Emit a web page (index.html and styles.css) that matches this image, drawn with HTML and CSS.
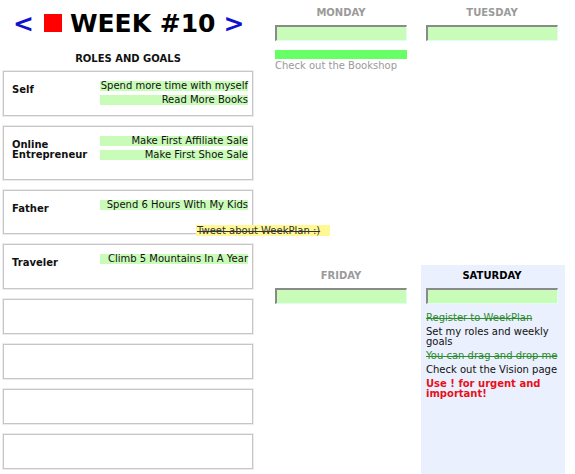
FILE: index.html
```html
<!DOCTYPE html>
<html>
<head>
<meta charset="utf-8">
<title>Week #10</title>
<link rel="stylesheet" href="styles.css">
</head>
<body>
<div class="page">
  <aside class="roles-panel">
    <div class="week-title">
      <span class="nav">&lt;</span>
      <span class="week-mark"></span>
      <span class="week-name">WEEK #10</span>
      <span class="nav">&gt;</span>
    </div>
    <h2 class="section-title">ROLES AND GOALS</h2>
    <div class="roles">
      <div class="role">
        <div class="role-name">Self</div>
        <div class="goals">
          <div class="goal">Spend more time with myself</div>
          <div class="goal">Read More Books</div>
        </div>
      </div>
      <div class="role role-tall">
        <div class="role-name">Online<br>Entrepreneur</div>
        <div class="goals">
          <div class="goal">Make First Affiliate Sale</div>
          <div class="goal">Make First Shoe Sale</div>
        </div>
      </div>
      <div class="role role-short">
        <div class="role-name">Father</div>
        <div class="goals">
          <div class="goal">Spend 6 Hours With My Kids</div>
        </div>
      </div>
      <div class="role">
        <div class="role-name">Traveler</div>
        <div class="goals">
          <div class="goal">Climb 5 Mountains In A Year</div>
        </div>
      </div>
      <div class="role role-empty"></div>
      <div class="role role-empty"></div>
      <div class="role role-empty"></div>
      <div class="role role-empty"></div>
    </div>
  </aside>

  <main class="days">
    <section class="day">
      <h3 class="day-name">MONDAY</h3>
      <div class="day-input"></div>
      <ul class="tasks">
        <li class="task task-bar"></li>
        <li class="task task-muted">Check out the Bookshop</li>
      </ul>
    </section>
    <section class="day">
      <h3 class="day-name">TUESDAY</h3>
      <div class="day-input"></div>
    </section>
    <section class="day">
      <h3 class="day-name">FRIDAY</h3>
      <div class="day-input"></div>
    </section>
    <section class="day day-today">
      <h3 class="day-name">SATURDAY</h3>
      <div class="day-input"></div>
      <ul class="tasks">
        <li class="task task-done">Register to WeekPlan</li>
        <li class="task">Set my roles and weekly goals</li>
        <li class="task task-done">You can drag and drop me</li>
        <li class="task">Check out the Vision page</li>
        <li class="task task-urgent">Use ! for urgent and important!</li>
      </ul>
    </section>
  </main>

  <div class="dragging">Tweet about WeekPlan :)</div>
</div>
</body>
</html>
```

FILE: styles.css
```css
html, body {
  margin: 0;
  padding: 0;
  background: #fff;
  overflow: hidden;
}

body {
  font-family: "DejaVu Sans", Verdana, sans-serif;
  font-size: 10px;
  color: #111;
}

.page {
  position: relative;
  display: flex;
  height: 474px;
}

/* ---------- roles column ---------- */
.roles-panel {
  flex: 0 0 258px;
  width: 258px;
  padding-left: 3px;
  box-sizing: border-box;
}

.week-title {
  display: flex;
  align-items: center;
  height: 46px;
  padding-left: 10px;
  font-weight: bold;
  font-size: 25px;
  white-space: nowrap;
}

.nav {
  color: #1010d0;
  font-size: 25px;
}

.week-mark {
  flex: 0 0 18px;
  width: 18px;
  height: 18px;
  background: #f00;
  margin: 0 8px 0 10px;
}

.week-name {
  color: #000;
  margin-right: 8px;
}

.section-title {
  margin: 6px 0 6px;
  width: 250px;
  text-align: center;
  font-size: 10px;
  font-weight: bold;
  line-height: 13px;
}

.roles {
  display: flex;
  flex-direction: column;
  gap: 10px;
  width: 250px;
}

.role {
  display: flex;
  height: 45px;
  box-sizing: border-box;
  border: 1px solid #c6c6c6;
  box-shadow: 0 0 0 1px #ececec;
}

.role-tall {
  height: 54px;
}

.role-short {
  height: 44px;
}

.role-empty {
  height: 35px;
}

.role-name {
  width: 96px;
  padding: 13px 0 0 8px;
  box-sizing: border-box;
  font-weight: bold;
  font-size: 10px;
  line-height: 10px;
}

.goals {
  flex: 1;
  padding: 9px 4px 0 0;
  display: flex;
  flex-direction: column;
  gap: 4px;
}

.goal {
  background: #c8fcb8;
  text-align: right;
  height: 10px;
  line-height: 10px;
  font-size: 10px;
  white-space: nowrap;
}

/* ---------- day columns ---------- */
.days {
  display: grid;
  grid-template-columns: 144px 144px;
  grid-template-rows: 263px 1fr;
  column-gap: 7px;
  padding: 2px 0 0 12px;
  align-content: start;
}

.day {
  padding: 5px 7px 0 5px;
}

.day-today {
  background: #eaf0fd;
}

.day-name {
  margin: 0;
  text-align: center;
  font-size: 10px;
  line-height: 12px;
  font-weight: bold;
  color: #9a9a9a;
}

.day-today .day-name {
  color: #000;
}

.day-input {
  margin-top: 6px;
  height: 16px;
  box-sizing: border-box;
  background: #c8fcb8;
  border-top: 2px solid #8a8a8a;
  border-left: 2px solid #8a8a8a;
  border-right: 1px solid #dfe;
  border-bottom: 1px solid #dfe;
}

.tasks {
  list-style: none;
  margin: 9px 0 0;
  padding: 0;
  display: flex;
  flex-direction: column;
  gap: 4px;
}

.task {
  font-size: 10px;
  line-height: 10px;
  color: #111;
}

.task-bar {
  height: 9px;
  background: #66ff66;
  margin-bottom: -2px;
}

.task-muted {
  color: #9a9a9a;
}

.task-done {
  color: #2e8b2e;
  text-decoration: line-through;
}

.task-urgent {
  color: #e8101a;
  font-weight: bold;
}

/* item being dragged across the board */
.dragging {
  position: absolute;
  left: 196px;
  top: 225px;
  width: 134px;
  height: 11px;
  padding-left: 1px;
  box-sizing: border-box;
  background: #fff894;
  font-size: 10px;
  line-height: 11px;
  color: #333;
  text-decoration: line-through;
  white-space: nowrap;
}
```
